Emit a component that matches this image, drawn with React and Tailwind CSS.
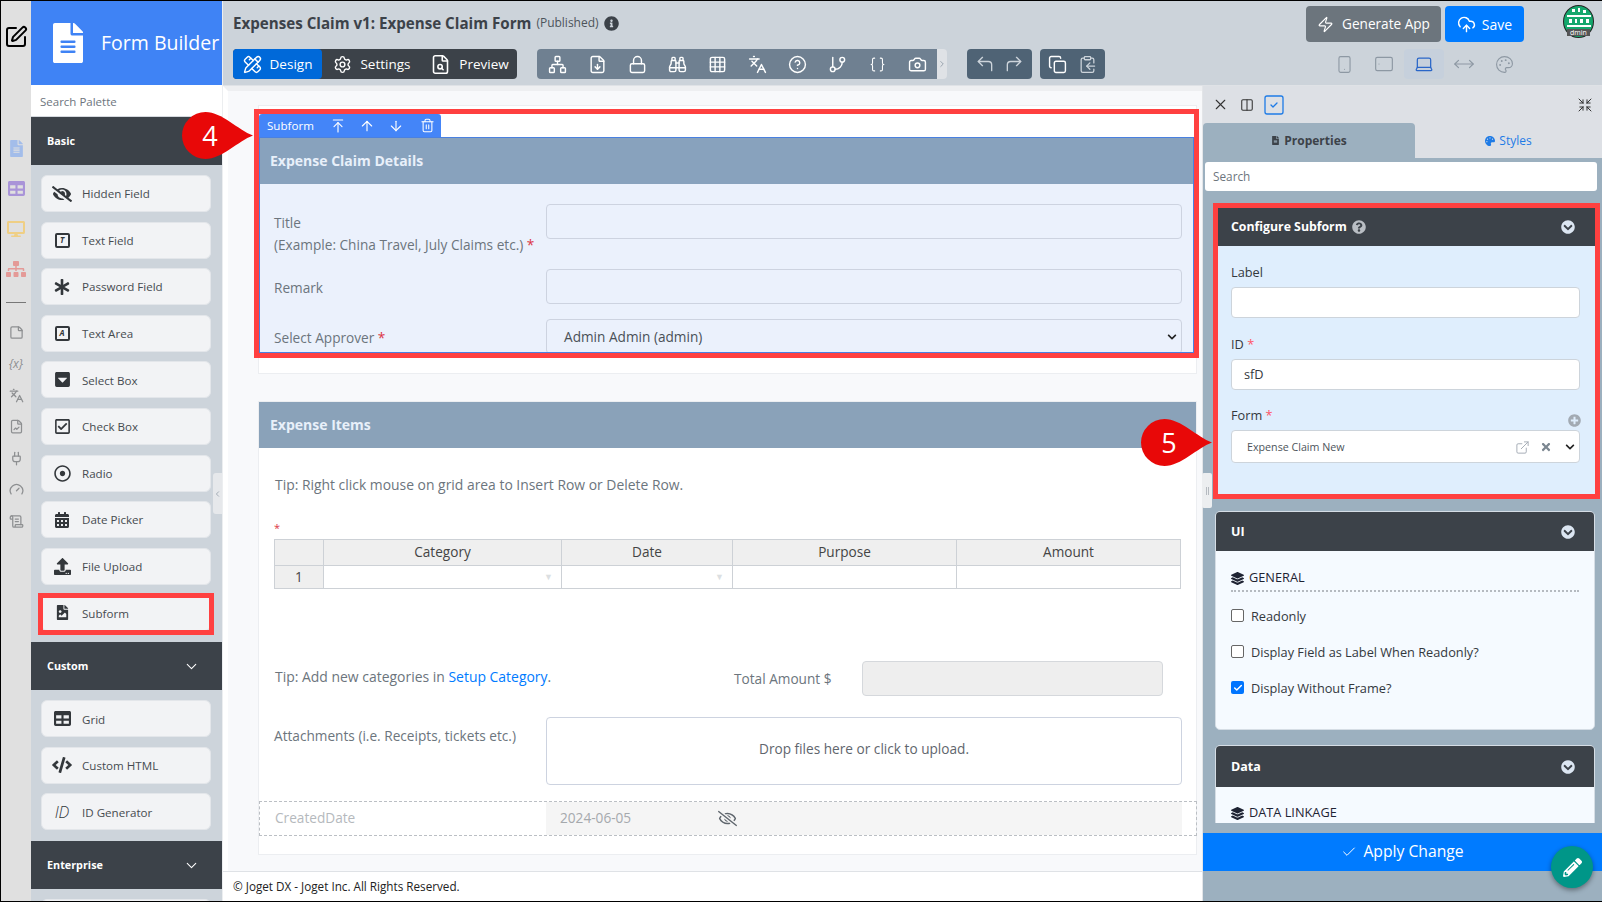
import React from 'react';
import { ChevronDown, ChevronLeft, ChevronRight, X, Check, Smartphone, Tablet, Laptop, MoveHorizontal, Palette, CornerUpLeft, CornerUpRight, Copy, ClipboardCopy, Lock, Network, Binoculars, Grid3x3, CircleHelp, GitBranch, Braces, Camera, Settings, PencilRuler, FileSearch, Zap, CloudUpload, ArrowUp, ArrowDown, ArrowUpToLine, Trash2, SquarePen, SquareCheck, Shrink, Languages, FileChartLine, Plug, Gauge, ScrollText, StickyNote, ExternalLink, FileDown, Columns2 } from 'lucide-react';
import { FaEyeSlash, FaAsterisk, FaCaretSquareDown, FaRegCheckSquare, FaRegDotCircle, FaCalendarAlt, FaUpload, FaFileImage, FaTable, FaCode, FaFileAlt, FaDesktop, FaSitemap, FaInfoCircle, FaQuestionCircle, FaChevronCircleDown, FaLayerGroup, FaPlusCircle, FaTimes, FaChevronDown, FaPencilAlt, FaRegEyeSlash, FaPalette } from 'react-icons/fa';

const font = { fontFamily: '"Open Sans", sans-serif' };

function PaletteItem({ icon, label, marked }) {
  return (
    <div className="relative h-[37px] mx-[10px] w-[170px] shrink-0 flex items-center bg-[#f2f3f5] rounded-md border border-[#e3e6ea] text-[#464b50] text-[11.6px]">
      <span className="w-[40px] flex justify-center text-[#33373b]">{icon}</span>
      <span className="pt-[1px]">{label}</span>
      {marked && <span className="absolute -left-[4px] -top-[2px] w-[176px] h-[42px] border-[5px] border-[#ff4040]" />}
    </div>
  );
}

function BoxLetter({ c }) {
  return <span className="w-[15px] h-[15px] border-2 border-[#33373b] rounded-[2px] text-[8px] italic font-bold flex items-center justify-center leading-none">{c}</span>;
}

function PaletteHead({ label, chevron }) {
  return (
    <div className="h-[48px] shrink-0 bg-[#3c4249] text-white text-[10.8px] font-bold flex items-center justify-between pl-[16px] pr-[22px]">
      <span>{label}</span>
      {chevron && <ChevronDown size={17} strokeWidth={1.5} />}
    </div>
  );
}

function RailIcon({ h, children }) {
  return <span className={`${h} flex items-center justify-center`}>{children}</span>;
}

function Rail() {
  const c = 'text-[#8d8f91]';
  return (
    <div className="w-[30px] shrink-0 bg-[#e0e0e0] flex flex-col items-center">
      <SquarePen size={24} strokeWidth={2} className="mt-[24px] text-black" />
      <div className="mt-[91px] flex flex-col items-center gap-[23px]">
        <RailIcon h="h-[17px]"><FaFileAlt size={17} className="text-[#a3bdea]" /></RailIcon>
        <RailIcon h="h-[17px]"><FaTable size={17} className="text-[#a994d8]" /></RailIcon>
        <RailIcon h="h-[17px]"><FaDesktop size={18} className="text-[#efcf85]" /></RailIcon>
        <RailIcon h="h-[17px]"><FaSitemap size={20} className="text-[#e49a97]" /></RailIcon>
      </div>
      <div className="mt-[25px] w-[20px] h-px bg-[#777]" />
      <div className="mt-[21px] flex flex-col items-center gap-[15.6px]">
        <RailIcon h="h-[16px]"><StickyNote size={15} className={c} /></RailIcon>
        <RailIcon h="h-[16px]"><span className={`text-[12px] italic leading-[15px] ${c}`}>{'{x}'}</span></RailIcon>
        <RailIcon h="h-[16px]"><Languages size={15} className={c} /></RailIcon>
        <RailIcon h="h-[16px]"><FileChartLine size={15} className={c} /></RailIcon>
        <RailIcon h="h-[16px]"><Plug size={15} className={c} /></RailIcon>
        <RailIcon h="h-[16px]"><Gauge size={15} className={c} /></RailIcon>
        <RailIcon h="h-[16px]"><ScrollText size={15} className={c} /></RailIcon>
      </div>
    </div>
  );
}

function PaletteCol() {
  return (
    <div className="relative w-[192px] shrink-0 bg-[#cdd4db] flex flex-col overflow-hidden border-r border-[#eceef0]">
      <div className="h-[84px] shrink-0 bg-[#3f83f5] flex items-center text-white">
        <FaFileAlt size={40} className="ml-[17px]" />
        <span className="ml-[13px] text-[19.5px] whitespace-nowrap">Form Builder</span>
      </div>
      <div className="h-[32px] shrink-0 bg-white border-b border-[#d5d9de] flex items-center pl-[9px] pt-[2px] text-[11.5px] text-[#6d757d]">Search Palette</div>
      <PaletteHead label="Basic" />
      <div className="flex flex-col gap-[9.6px] pt-[10px] pb-[11px]">
        <PaletteItem label="Hidden Field" icon={<FaEyeSlash size={20} />} />
        <PaletteItem label="Text Field" icon={<BoxLetter c="T" />} />
        <PaletteItem label="Password Field" icon={<FaAsterisk size={16} />} />
        <PaletteItem label="Text Area" icon={<BoxLetter c="A" />} />
        <PaletteItem label="Select Box" icon={<FaCaretSquareDown size={17} />} />
        <PaletteItem label="Check Box" icon={<FaRegCheckSquare size={17} />} />
        <PaletteItem label="Radio" icon={<FaRegDotCircle size={17} />} />
        <PaletteItem label="Date Picker" icon={<FaCalendarAlt size={16} />} />
        <PaletteItem label="File Upload" icon={<FaUpload size={17} />} />
        <PaletteItem label="Subform" marked icon={<FaFileImage size={15} />} />
      </div>
      <PaletteHead label="Custom" chevron />
      <div className="flex flex-col gap-[9.5px] pt-[10px] pb-[11px]">
        <PaletteItem label="Grid" icon={<FaTable size={17} />} />
        <PaletteItem label="Custom HTML" icon={<FaCode size={20} />} />
        <PaletteItem label="ID Generator" icon={<span className="italic text-[16px] font-light leading-none">ID</span>} />
      </div>
      <PaletteHead label="Enterprise" chevron />
      <div className="pt-[10px]"><PaletteItem label="" icon={null} /></div>
      <div className="absolute left-[182px] top-[472px] w-[9px] h-[41px] bg-[#e6e8eb] rounded-l-[3px] flex items-center justify-center text-[#8d98a3]"><ChevronLeft size={10} /></div>
    </div>
  );
}

function ToolIcon({ children }) {
  return <span className="w-[40px] flex justify-center">{children}</span>;
}

function TopBar() {
  const s = { size: 19, strokeWidth: 1.8 };
  return (
    <div className="h-[85px] shrink-0 bg-[#ccd3da] border-b border-[#dfe2e6] pl-[10px] pr-[8px] flex flex-col">
      <div className="h-[48px] flex items-start">
        <div className="flex items-center mt-[11px] text-[#3c4249]">
          <span className="font-bold text-[15.15px]">Expenses Claim v1: Expense Claim Form</span>
          <span className="ml-[5px] text-[12px] text-[#4d545b]">(Published)</span>
          <FaInfoCircle size={15} className="ml-[5px]" />
        </div>
        <div className="ml-auto flex items-start mt-[5px]">
          <div className="w-[135px] h-[36px] bg-[#6c757d] rounded-[4px] flex items-center justify-center gap-[8px] text-white text-[13.6px]"><Zap size={17} strokeWidth={1.6} /><span>Generate App</span></div>
          <div className="ml-[4px] w-[79px] h-[36px] bg-[#007bff] rounded-[4px] flex items-center justify-center gap-[6px] text-white text-[14px]"><CloudUpload size={19} strokeWidth={1.8} /><span>Save</span></div>
          <div className="ml-[39px] -mt-[1px] w-[31px] h-[33px]">
            <svg viewBox="0 0 31 33" width="31" height="33">
              <ellipse cx="15.5" cy="16.5" rx="15.5" ry="16.5" fill="#222" />
              <ellipse cx="15.5" cy="16.5" rx="14.5" ry="15.5" fill="#14a76c" />
              <path d="M9 4h3v3H9zM15 3h2v4h-2zM20 5h3v3h-3zM4 10h24v2H4zM6 14h3v4H6zM12 14h2v4h-2zM17 14h3v4h-3zM23 14h3v4h-3zM4 20h24v2H4z" fill="#fff" />
              <rect x="4" y="24" width="23" height="7" fill="#555" />
              <text x="15.5" y="30" fontSize="7" textAnchor="middle" fill="#fff" fontFamily="Open Sans">dmin</text>
            </svg>
          </div>
        </div>
      </div>
      <div className="flex items-center h-[30px]">
        <div className="w-[284px] h-[30px] bg-[#3c4249] rounded-[4px] flex items-center text-white text-[13.5px]">
          <div className="w-[89px] h-full bg-[#0069d9] rounded-[4px] flex items-center justify-center gap-[8px]"><PencilRuler size={19} strokeWidth={1.8} />Design</div>
          <div className="w-[100px] flex items-center justify-center gap-[8px]"><Settings size={19} strokeWidth={1.8} />Settings</div>
          <div className="w-[95px] flex items-center justify-center gap-[8px]"><FileSearch size={21} strokeWidth={1.8} />Preview</div>
        </div>
        <div className="ml-[20px] h-[30px] flex items-center">
          <div className="w-[400px] h-full bg-[#6f8091] rounded-l-[4px] flex items-center text-white">
            <ToolIcon><Network {...s} /></ToolIcon>
            <ToolIcon><FileDown {...s} /></ToolIcon>
            <ToolIcon><Lock {...s} /></ToolIcon>
            <ToolIcon><Binoculars {...s} /></ToolIcon>
            <ToolIcon><Grid3x3 {...s} /></ToolIcon>
            <ToolIcon><Languages {...s} /></ToolIcon>
            <ToolIcon><CircleHelp {...s} /></ToolIcon>
            <ToolIcon><GitBranch {...s} /></ToolIcon>
            <ToolIcon><Braces size={17} strokeWidth={1.5} /></ToolIcon>
            <ToolIcon><Camera {...s} /></ToolIcon>
          </div>
          <div className="w-[10px] h-full bg-[#dfe2e6] rounded-r-[4px] flex items-center justify-center text-[#8d98a3]"><ChevronRight size={10} /></div>
        </div>
        <div className="ml-[20px] w-[65px] h-[30px] bg-[#4f6375] rounded-[4px] flex items-center justify-around px-[3px] text-[#cdd4db]"><CornerUpLeft size={20} strokeWidth={1.6} /><CornerUpRight size={20} strokeWidth={1.6} /></div>
        <div className="ml-[8px] w-[65px] h-[30px] bg-[#4f6375] rounded-[4px] flex items-center justify-around px-[3px] text-white"><Copy size={19} strokeWidth={1.8} /><ClipboardCopy size={19} strokeWidth={1.6} className="text-[#cdd4db]" /></div>
        <div className="ml-auto mr-[70px] flex items-center text-[#8d98a3]">
          <span className="w-[40px] flex justify-center"><Smartphone size={19} strokeWidth={1.4} /></span>
          <span className="w-[40px] flex justify-center"><Tablet size={20} strokeWidth={1.4} className="rotate-90" /></span>
          <span className="w-[40px] h-[30px] flex items-center justify-center bg-[#c6d0dc] rounded-[4px] text-[#2a66c8]"><Laptop size={20} strokeWidth={1.5} /></span>
          <span className="w-[40px] flex justify-center"><MoveHorizontal size={22} strokeWidth={1.3} /></span>
          <span className="w-[40px] flex justify-center"><Palette size={19} strokeWidth={1.4} /></span>
        </div>
      </div>
    </div>
  );
}

function FieldBox({ className = '', children }) {
  return <div className={`border border-[#cdd3e0] rounded-[4px] ${className}`}>{children}</div>;
}

function Star() {
  return <span className="text-[#dc3545]"> *</span>;
}

function Canvas() {
  return (
    <div className="flex-1 flex flex-col min-w-0">
      <div className="flex-1 min-h-0 overflow-hidden bg-[#f8f9fb] border-l-[5px] border-l-white border-t-[5px] border-t-[#eeeff1] pl-[30px] text-[13.65px] text-[#6c757d]">
        <div className="mt-[14px] w-[939px] h-[269px] bg-white border border-[#eceef1] pt-[3px]">
          <div className="-ml-[5px] -mr-[3px] h-[249px] border-[5px] border-[#ff4040] overflow-hidden">
            <div className="h-[24px] bg-white flex border-b border-[#4a80e0]">
              <div className="w-[182px] bg-[#4485f8] rounded-t-[3px] text-white text-[11.6px] flex items-center pl-[8px]">
                <span>Subform</span>
                <ArrowUpToLine size={16} className="ml-[16px]" strokeWidth={1.7} />
                <ArrowUp size={16} className="ml-[13px]" strokeWidth={1.7} />
                <ArrowDown size={16} className="ml-[13px]" strokeWidth={1.7} />
                <Trash2 size={15} className="ml-[16px]" strokeWidth={1.7} />
              </div>
            </div>
            <div className="border-l border-r border-b border-[#4a80e0] h-[215px] overflow-hidden bg-[#ebf1fc]">
              <div className="h-[46px] bg-[#88a2bd] text-[#e8f0fa] font-bold text-[14px] flex items-center pl-[10px] pb-[2px]">Expense Claim Details</div>
              <div className="pt-[20px] pl-[14px] pr-[11px]">
                <div className="flex h-[35px]">
                  <div className="w-[272px] shrink-0 mt-[8px] leading-[21.5px]">Title<br />(Example: China Travel, July Claims etc.)<Star /></div>
                  <FieldBox className="flex-1 h-[35px]" />
                </div>
                <div className="flex h-[35px] mt-[30px]">
                  <div className="w-[272px] shrink-0 flex items-center pt-[3px]">Remark</div>
                  <FieldBox className="flex-1" />
                </div>
                <div className="flex mt-[15px] h-[35px]">
                  <div className="w-[272px] shrink-0 mt-[9px]">Select Approver<Star /></div>
                  <FieldBox className="flex-1 flex items-center justify-between pl-[17px] pr-[4px] pt-[1px] text-[#495057]">
                    <span>Admin Admin (admin)</span>
                    <FaChevronDown size={10} className="text-[#222]" />
                  </FieldBox>
                </div>
              </div>
            </div>
          </div>
        </div>
        <div className="mt-[27px] w-[939px] h-[454px] bg-white border border-[#eceef1]">
          <div className="h-[46px] bg-[#8aa2b9] text-[#e8f0fa] font-bold text-[14px] flex items-center pl-[11px] pb-[2px]">Expense Items</div>
          <div className="pl-[15px]">
            <div className="mt-[27px] ml-[1px] h-[20px] flex items-center text-[13.9px]">Tip: Right click mouse on grid area to Insert Row or Delete Row.</div>
            <div className="mt-[26px] h-[18px] text-[#dc3545] text-[11px] leading-[14px]">*</div>
            <table className="table-fixed border-collapse w-[906px] text-[#444] text-[13.6px]">
              <colgroup>
                <col className="w-[49px]" /><col className="w-[238px]" /><col className="w-[171px]" /><col className="w-[224px]" /><col className="w-[224px]" />
              </colgroup>
              <thead>
                <tr className="h-[26px] bg-[#efefef]">
                  <th className="border border-[#cdd1d6] font-normal"></th>
                  <th className="border border-[#cdd1d6] font-normal">Category</th>
                  <th className="border border-[#cdd1d6] font-normal">Date</th>
                  <th className="border border-[#cdd1d6] font-normal">Purpose</th>
                  <th className="border border-[#cdd1d6] font-normal">Amount</th>
                </tr>
              </thead>
              <tbody>
                <tr className="h-[23px]">
                  <td className="border border-[#cdd1d6] bg-[#efefef] text-center">1</td>
                  <td className="border border-[#cdd1d6] text-right pr-[8px] text-[#dcdfe2] text-[9px]">▼</td>
                  <td className="border border-[#cdd1d6] text-right pr-[8px] text-[#dcdfe2] text-[9px]">▼</td>
                  <td className="border border-[#cdd1d6]"></td>
                  <td className="border border-[#cdd1d6]"></td>
                </tr>
              </tbody>
            </table>
            <div className="mt-[72px] flex h-[35px] items-center">
              <div className="w-[460px] shrink-0 -mt-[2px] pl-[1px] text-[13.95px]">Tip: Add new categories in <span className="text-[#007bff]">Setup Category</span>.</div>
              <div className="w-[128px] shrink-0 pt-[2px]">Total Amount $</div>
              <div className="w-[301px] h-[35px] bg-[#eeeeee] border border-[#d5d8dc] rounded-[4px]" />
            </div>
            <div className="mt-[21px] flex h-[68px]">
              <div className="w-[272px] shrink-0 mt-[9px]">Attachments (i.e. Receipts, tickets etc.)</div>
              <FieldBox className="w-[636px] h-[68px] flex justify-center pt-[21px] text-[#5f666d]">Drop files here or click to upload.</FieldBox>
            </div>
          </div>
          <div className="mt-[16px] h-[35px] w-[938px] border border-dashed border-[#bbbfc4] flex pr-[14px]">
            <div className="w-[286px] shrink-0 pl-[15px] flex items-center text-[#b5b9bd]">CreatedDate</div>
            <div className="flex-1 bg-[#f5f5f5] flex items-center pl-[14px] text-[#a5a9ad]">
              <span className="w-[158px]">2024-06-05</span>
              <FaRegEyeSlash size={19} className="text-[#5f666d]" />
            </div>
          </div>
        </div>
      </div>
      <div className="h-[30px] shrink-0 bg-white border-t border-[#dfe2e6] flex items-center pl-[10px] text-[11.7px] text-[#222]">© Joget DX - Joget Inc. All Rights Reserved.</div>
    </div>
  );
}

function Panel({ title, children, className = '', h }) {
  return (
    <div className={`${className} ml-[12px] w-[380px] rounded-[5px] overflow-hidden bg-[#f5faff] border border-[#d5dde5]`}>
      <div className={`${h} bg-[#3c4249] text-white text-[12.5px] font-bold flex items-center justify-between pl-[15px] pr-[19px]`}>
        <span className="pt-[2px]">{title}</span>
        <FaChevronCircleDown size={14} className="text-[#dce6f2]" />
      </div>
      {children}
    </div>
  );
}

function Check2({ checked, label }) {
  return (
    <div className="flex items-center gap-[7px] h-[20px]">
      <span className={`w-[13px] h-[13px] rounded-[2px] flex items-center justify-center -mt-[3px] ${checked ? 'bg-[#0075ff]' : 'bg-white border border-[#666]'}`}>
        {checked && <Check size={10} strokeWidth={3.5} className="text-white" />}
      </span>
      <span>{label}</span>
    </div>
  );
}

function RightPanel() {
  return (
    <div className="relative w-[400px] shrink-0 bg-[#9cb0bf] flex flex-col border-l border-[#e3e5e8] text-[12.75px] text-[#33383d]">
      <div className="h-[37px] shrink-0 bg-[#dde0e5] flex items-center pl-[9px] pr-[9px] text-[#333]">
        <X size={17} strokeWidth={1.5} />
        <span className="ml-[11px]"><Columns2 size={14} strokeWidth={1.8} /></span>
        <SquareCheck size={24} strokeWidth={1.3} className="ml-[8px] text-[#1e7be6]" />
        <Shrink size={16} strokeWidth={1.5} className="ml-auto" />
      </div>
      <div className="h-[35px] shrink-0 flex bg-[#dde0e5] text-[12px]">
        <div className="w-[212px] bg-[#9cb0bf] rounded-t-[4px] flex items-center justify-center gap-[4px] font-bold text-[#3c4249]"><FaFileAlt size={9} />Properties</div>
        <div className="flex-1 flex items-center justify-center gap-[4px] text-[#1e7be6]"><FaPalette size={10} />Styles</div>
      </div>
      <div className="mx-[2px] mt-[4px] w-[392px] h-[29px] shrink-0 bg-white rounded-[3px] flex items-center pl-[8px] pt-[1px] text-[11.8px] text-[#6d757d]">Search</div>
      <div className="flex-1 min-h-0 overflow-hidden pt-[12px]">
        <div className="ml-[10px] w-[387px] h-[296px] border-[5px] border-[#ff4040] bg-[#dfeefd]">
          <div className="h-[38px] bg-[#3c4249] text-white text-[12.3px] font-bold flex items-center justify-between pl-[13px] pr-[20px]">
            <span className="flex items-center gap-[5px]">Configure Subform <FaQuestionCircle size={14} className="text-[#b9bec4]" /></span>
            <FaChevronCircleDown size={14} className="text-[#dce6f2]" />
          </div>
          <div className="pl-[13px] pt-[16px]">
            <div className="h-[20px] leading-[20px]">Label</div>
            <div className="mt-[5px] w-[349px] h-[31px] bg-white border border-[#cdd4db] rounded-[4px]" />
            <div className="mt-[16px] h-[20px] leading-[20px]">ID <span className="text-[#ff5566]">*</span></div>
            <div className="mt-[5px] w-[349px] h-[31px] bg-white border border-[#cdd4db] rounded-[4px] flex items-center pl-[12px] pt-[1px]">sfD</div>
            <div className="mt-[15px] h-[20px] leading-[20px] w-[349px] flex items-center justify-between">
              <span>Form <span className="text-[#ff5566]">*</span></span>
              <FaPlusCircle size={13} className="text-[#a2aab3] mt-[10px] -mr-[1px]" />
            </div>
            <div className="mt-[5px] w-[349px] h-[33px] bg-white border border-[#cdd4db] rounded-[4px] flex items-center pl-[15px] pr-[4px] pt-[1px] text-[10.7px] text-[#4d545b]">
              <span>Expense Claim New</span>
              <ExternalLink size={15} strokeWidth={1.5} className="ml-auto text-[#a2aab3]" />
              <FaTimes size={12} className="ml-[10px] text-[#7c8791]" />
              <FaChevronDown size={10} className="ml-[13px] text-[#222]" />
            </div>
          </div>
        </div>
        <Panel title="UI" className="mt-[12px]" h="h-[39px]">
          <div className="h-[178px] pt-[17px] pl-[15px] pr-[15px]">
            <div className="flex items-center gap-[5px] h-[20px] text-[#1e2333]"><FaLayerGroup size={13} />GENERAL</div>
            <div className="mt-[2px] border-t-2 border-dotted border-[#b5bac0]" />
            <div className="mt-[15px] flex flex-col gap-[16px]">
              <Check2 label="Readonly" />
              <Check2 label="Display Field as Label When Readonly?" />
              <Check2 checked label="Display Without Frame?" />
            </div>
          </div>
        </Panel>
        <Panel title="Data" className="mt-[15px]" h="h-[41px]">
          <div className="h-[60px] pt-[16px] pl-[15px]">
            <div className="flex items-center gap-[5px] h-[20px] text-[#1e2333]"><FaLayerGroup size={13} />DATA LINKAGE</div>
          </div>
        </Panel>
      </div>
      <div className="mt-[10px] h-[38px] shrink-0 bg-[#007bff] text-white text-[15.7px] flex items-center justify-center gap-[6px]"><Check size={16} strokeWidth={1.5} />Apply Change</div>
      <div className="h-[30px] shrink-0" />
      <div className="absolute -left-[1px] top-[387px] w-[10px] h-[35px] bg-[#eceef0] rounded-[2px] flex items-center justify-center gap-[1px]"><span className="w-px h-[8px] bg-[#b5bac0]" /><span className="w-px h-[8px] bg-[#b5bac0]" /></div>
      <div className="absolute left-[348px] bottom-[13px] w-[42px] h-[42px] rounded-full bg-[#009688] shadow-[0_2px_5px_rgba(0,0,0,0.4)] flex items-center justify-center text-white"><FaPencilAlt size={19} /></div>
    </div>
  );
}

function Marker({ n, className }) {
  return (
    <div className={`absolute w-[71px] h-[47px] ${className}`}>
      <svg viewBox="0 0 71 47" width="71" height="47" className="absolute inset-0">
        <path d="M71 23.5C56 18 40 0 23.5 0A23.5 23.5 0 0 0 23.5 47C40 47 56 29 71 23.5Z" fill="#e80808" />
      </svg>
      <span className="absolute left-[16px] top-[3px] w-[24px] text-center text-white text-[27px] leading-[41px]">{n}</span>
    </div>
  );
}

export default function App() {
  return (
    <div style={font} className="relative w-[1602px] h-[902px] overflow-hidden flex border-t border-b border-l border-black bg-[#ccd3da]">
      <Rail />
      <PaletteCol />
      <div className="flex-1 min-w-0 flex flex-col">
        <TopBar />
        <div className="flex-1 min-h-0 flex">
          <Canvas />
          <RightPanel />
        </div>
      </div>
      <Marker n="4" className="left-[181px] top-[111px]" />
      <Marker n="5" className="left-[1140px] top-[418px]" />
    </div>
  );
}
